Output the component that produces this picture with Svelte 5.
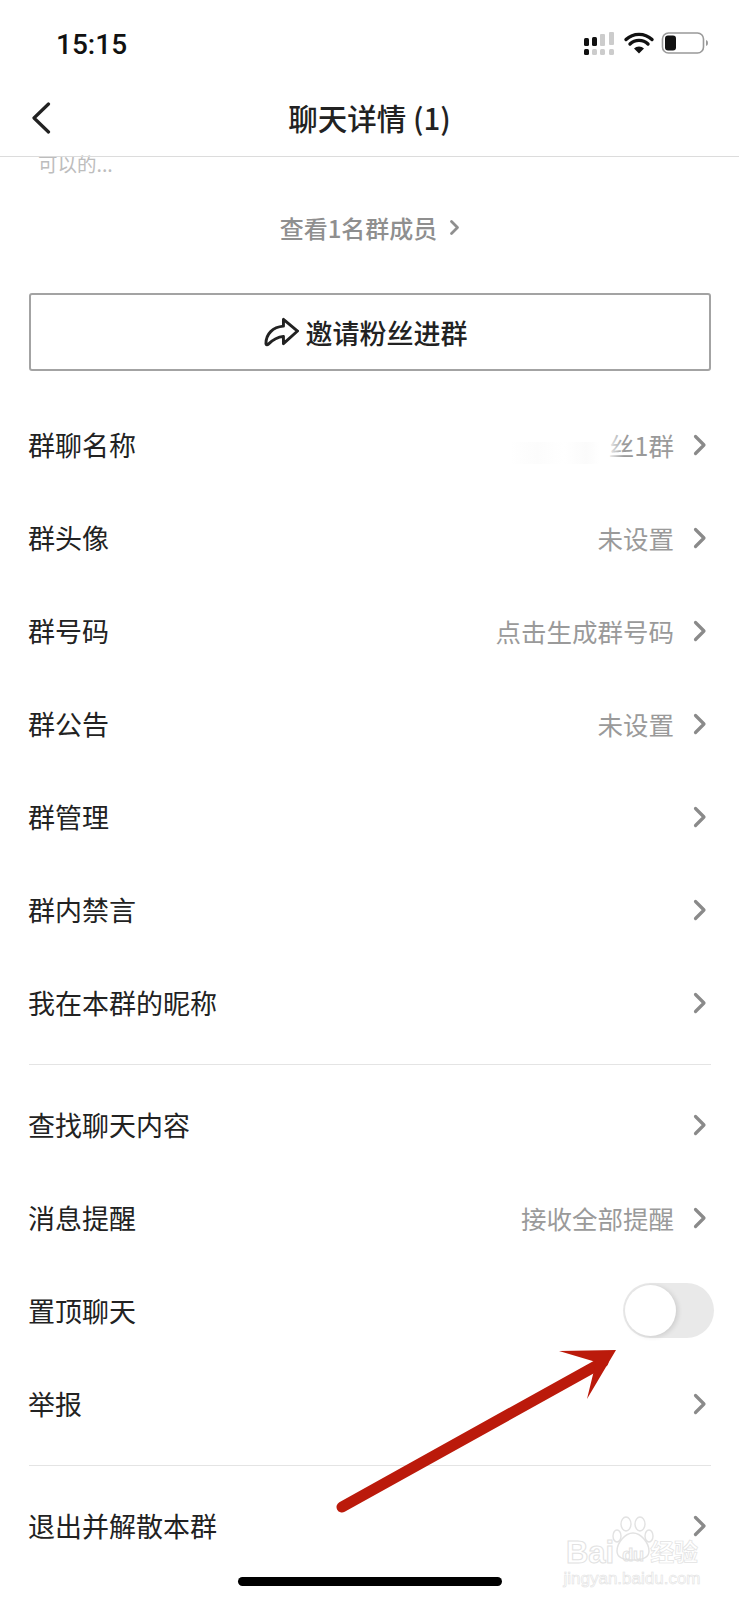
<script>
	const groupOne = [
		{ label: '群聊名称', value: '丝1群', faded: true },
		{ label: '群头像', value: '未设置' },
		{ label: '群号码', value: '点击生成群号码' },
		{ label: '群公告', value: '未设置' },
		{ label: '群管理' },
		{ label: '群内禁言' },
		{ label: '我在本群的昵称' }
	];
	const groupTwo = [
		{ label: '查找聊天内容' },
		{ label: '消息提醒', value: '接收全部提醒' },
		{ label: '置顶聊天', toggle: true },
		{ label: '举报' }
	];
	const groupThree = [{ label: '退出并解散本群' }];
	const groups = [groupOne, groupTwo, groupThree];
</script>

<div class="page">
	<header class="status">
		<span class="time">15:15</span>
		<svg class="status-icons" width="125" height="24" viewBox="0 0 125 24">
			<g fill="#111">
				<rect x="0" y="6" width="5" height="8" rx="1.5" />
				<rect x="8" y="5" width="5" height="9" rx="1.5" />
				<rect x="0" y="17" width="5" height="6" rx="1.5" />
			</g>
			<g fill="#ccc">
				<rect x="16" y="2" width="5" height="12" rx="1" />
				<rect x="25" y="0" width="5" height="13" rx="1" />
				<rect x="8" y="17" width="5" height="6" rx="1.5" />
				<rect x="16" y="17" width="5" height="6" rx="1.5" />
				<rect x="25" y="17" width="5" height="6" rx="1.5" />
			</g>
			<path d="M42 7.5a19 19 0 0 1 26 0M46 12a13 13 0 0 1 18 0" fill="none" stroke="#111" stroke-width="3.4" stroke-linecap="round" />
			<path d="M50 16.5a7 7 0 0 1 10 0L55 21.5z" fill="#111" />
			<rect x="78.5" y="1" width="41" height="20" rx="6" fill="none" stroke="#999" stroke-width="1.6" />
			<rect x="81" y="3.5" width="11" height="15" rx="3" fill="#111" />
			<path d="M122 8v6a3 3 0 0 0 2-3 3 3 0 0 0-2-3z" fill="#999" />
		</svg>
	</header>

	<nav class="nav">
		<svg class="back" width="20" height="32" viewBox="0 0 20 32">
			<path d="M17.5 2 3 16l14.5 14" fill="none" stroke="#222" stroke-width="3.2" stroke-linecap="round" stroke-linejoin="round" />
		</svg>
		<h1>聊天详情 (1)</h1>
	</nav>

	<main class="content">
		<p class="clipped">可以的...</p>

		<a class="members">
			查看1名群成员
			<svg width="11" height="17" viewBox="0 0 11 17">
				<path d="M2.500 2.500l6 6-6 6" fill="none" stroke="#8f8f8f" stroke-width="2.800" stroke-linecap="round" stroke-linejoin="round" />
			</svg>
		</a>

		<button class="invite">
			<svg width="35" height="30" viewBox="0 0 36 30">
				<path d="M34.500 14 20 2v7C9 10 2 17 2 27c0 1.500 1.500 1.500 2.500.5C9 23 14 20 20 19.500V27z" fill="none" stroke="#222" stroke-width="3" stroke-linejoin="round" />
			</svg>
			邀请粉丝进群
		</button>

		{#each groups as group, i}
			{#if i > 0}
				<hr />
			{/if}
			<ul>
				{#each group as row}
					<li>
						<span class="label">{row.label}</span>
						{#if row.toggle}
							<span class="toggle"><span class="knob"></span></span>
						{:else}
							{#if row.value}
								<span class="value" class:faded={row.faded}>{row.value}</span>
							{/if}
							<svg class="chevron" width="14" height="22" viewBox="0 0 14 22">
								<path d="M2.500 2.500 11 11l-8.500 8.500" fill="none" stroke="#8a8a8a" stroke-width="3.2" stroke-linecap="round" stroke-linejoin="round" />
							</svg>
						{/if}
					</li>
				{/each}
			</ul>
		{/each}
	</main>

	<div class="smudge"></div>
	<div class="home-bar"></div>

	<svg class="arrow" width="739" height="1600" viewBox="0 0 739 1600">
		<path d="M342 1507 603 1362" stroke="#bb1a0b" stroke-width="11" stroke-linecap="round" fill="none" />
		<path d="M616 1350 559 1351 596 1362 587 1399z" fill="#bb1a0b" />
	</svg>

	<div class="watermark">
		<svg width="44" height="46" viewBox="0 0 44 46">
			<g fill="none" stroke="#e2e2e2" stroke-width="1.4">
				<ellipse cx="6" cy="20" rx="4" ry="6" />
				<ellipse cx="15" cy="8" rx="5" ry="7" />
				<ellipse cx="29" cy="8" rx="5" ry="7" />
				<ellipse cx="38" cy="20" rx="4" ry="6" />
				<path d="M22 17c-8 0-16 10-16 18 0 6 6 9 16 9s16-3 16-9c0-8-8-18-16-18z" />
			</g>
		</svg>
		<div class="brand"><span>Bai</span><span class="du">du</span><span class="cn">经验</span></div>
		<div class="site">jingyan.baidu.com</div>
	</div>
</div>

<style>
	:global(body) {
		margin: 0;
		background: #fff;
	}

	.page {
		position: relative;
		width: 739px;
		height: 1600px;
		overflow: hidden;
		background: #fff;
		color: #222;
		font-family: 'Noto Sans CJK SC', 'Liberation Sans', sans-serif;
	}

	.status {
		display: flex;
		justify-content: space-between;
		align-items: center;
		height: 88px;
		padding: 0 30px 0 56px;
		box-sizing: border-box;
	}

	.time {
		font-family: Roboto, sans-serif;
		font-size: 28px;
		font-weight: 500;
		color: #111;
	}

	.status-icons {
		display: block;
	}

	.nav {
		position: relative;
		display: flex;
		justify-content: center;
		align-items: center;
		height: 68px;
		border-bottom: 1px solid #dcdcdc;
	}

	.back {
		position: absolute;
		left: 31px;
		top: 14px;
	}

	h1 {
		margin: 0;
		font-size: 29.500px;
		font-weight: 500;
		color: #222;
		line-height: 60px;
		position: relative;
		top: -5px;
	}

	.content {
		padding: 0 28px 0 29px;
	}

	.clipped {
		margin: -5px 0 0 9px;
		height: 24px;
		line-height: 24px;
		overflow: hidden;
		font-size: 19.500px;
		color: #bdbdbd;
	}

	.members {
		display: flex;
		justify-content: center;
		align-items: center;
		gap: 12px;
		margin-top: 31px;
		height: 40px;
		font-size: 24px;
		font-weight: 500;
		color: #8f8f8f;
	}

	.invite {
		display: flex;
		justify-content: center;
		align-items: center;
		gap: 7px;
		width: 100%;
		height: 78px;
		margin: 46px 0 27px;
		padding: 0 9px 0 0;
		background: #fff;
		border: 2px solid #a3a3a3;
		border-radius: 3px;
		font-family: inherit;
		font-size: 27px;
		font-weight: 500;
		color: #222;
	}

	ul {
		list-style: none;
		margin: 0;
		padding: 0;
	}

	li {
		display: flex;
		align-items: center;
		height: 93px;
		font-size: 27px;
	}

	.label {
		flex: 1;
		position: relative;
		left: -1px;
	}

	.value {
		position: relative;
		font-size: 25.500px;
		color: #9a9a9a;
		margin-right: 19px;
	}

	.faded::before {
		content: '';
		position: absolute;
		left: -3px;
		top: 0;
		width: 18px;
		height: 100%;
		background: linear-gradient(90deg, #fff, rgba(255, 255, 255, 0));
	}

	.chevron {
		margin-right: 4px;
	}

	.toggle {
		display: block;
		width: 91px;
		height: 55px;
		margin-right: -3px;
		border-radius: 28px;
		background: #e9e9e9;
		position: relative;
	}

	.knob {
		position: absolute;
		left: 2px;
		top: 2px;
		width: 51px;
		height: 51px;
		border-radius: 50%;
		background: #fff;
		box-shadow: 2px 1px 5px rgba(0, 0, 0, 0.12);
	}

	hr {
		margin: 15px 0 13px;
		border: 0;
		border-top: 1px solid #e4e4e4;
	}

	.smudge {
		position: absolute;
		left: 510px;
		top: 442px;
		width: 90px;
		height: 22px;
		background: linear-gradient(90deg, #fff, #fcfcfc 30%, #fff 60%, #fbfbfb 85%, #fff);
	}

	.home-bar {
		position: absolute;
		left: 238px;
		top: 1577px;
		width: 264px;
		height: 9px;
		border-radius: 5px;
		background: #000;
	}

	.arrow {
		position: absolute;
		left: 0;
		top: 0;
		pointer-events: none;
	}

	.watermark {
		position: absolute;
		left: 562px;
		top: 1516px;
		width: 140px;
		text-align: center;
		color: transparent;
		font-family: 'Liberation Sans', 'Noto Sans CJK SC', sans-serif;
		-webkit-text-stroke: 1px #e2e2e2;
	}

	.watermark svg {
		position: absolute;
		left: 49px;
		top: 0;
	}

	.brand {
		display: flex;
		justify-content: center;
		align-items: center;
		margin-top: 22px;
		font-size: 31px;
		line-height: 26px;
		font-weight: 700;
	}

	.du {
		font-size: 18px;
		margin: 4px 6px 0 8px;
	}

	.cn {
		font-size: 24px;
		-webkit-text-stroke: 0.7px #e2e2e2;
	}

	.site {
		margin-top: 2px;
		font-size: 17px;
		line-height: 18px;
		-webkit-text-stroke: 0.6px #e2e2e2;
	}
</style>
